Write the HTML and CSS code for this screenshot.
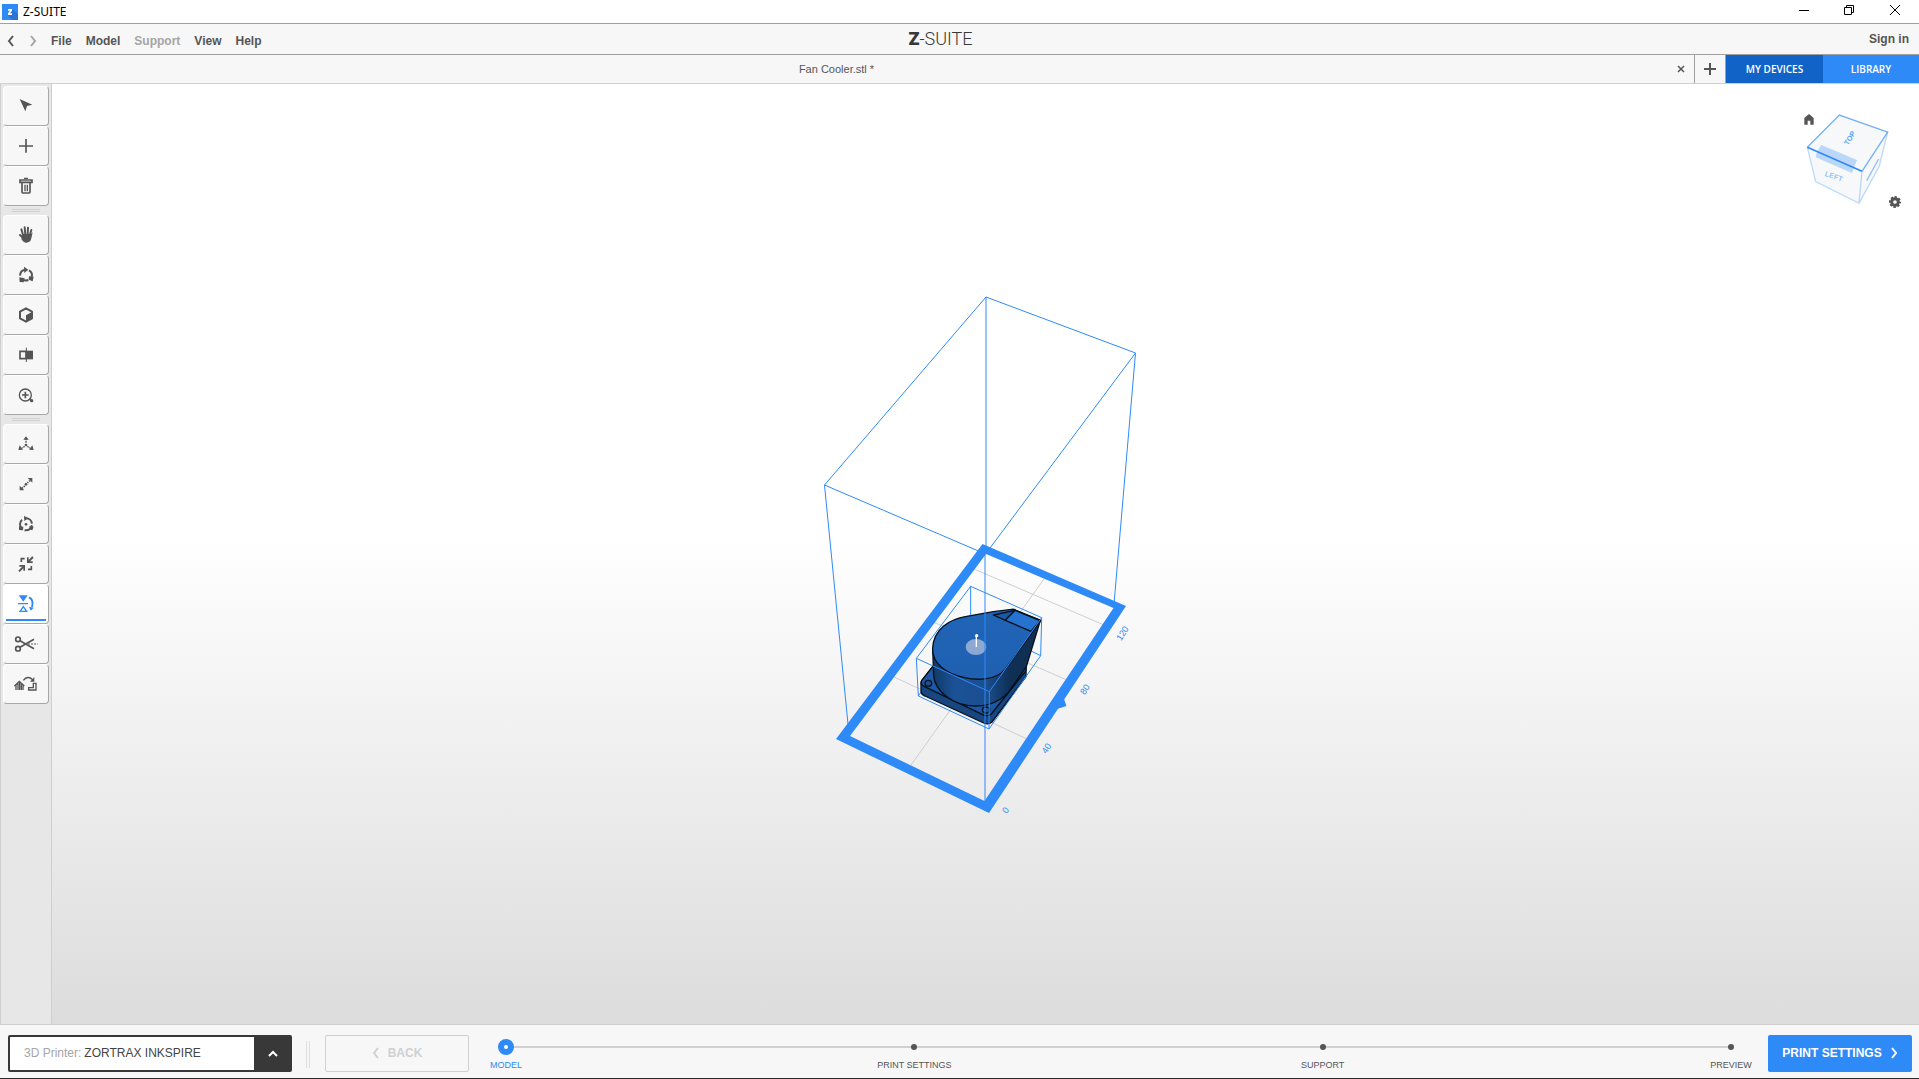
FILE: index.html
```html
<!DOCTYPE html>
<html lang="en">
<head>
<meta charset="utf-8">
<title>Z-SUITE</title>
<link rel="stylesheet" href="styles.css">
</head>
<body>
<div class="app">
  <header class="titlebar">
    <svg class="app-icon" viewBox="0 0 48 48" aria-hidden="true"><path fill="#2e8af7" d="M0 0h48v48H0z"/><path fill="#2a74d6" d="M30 16l18 14v18H30L18 33z"/><path fill="#fff" d="M18 15h12v5l-6 8h6v5H18v-5l6-8h-6z"/></svg>
    <span class="app-title">Z-SUITE</span>
    <div class="window-controls">
      <button type="button" aria-label="Minimize"><svg viewBox="0 0 12 12"><path d="M1 6.5h10"/></svg></button>
      <button type="button" aria-label="Restore"><svg viewBox="0 0 12 12"><path d="M.5 3.500h7v7h-7zM2.500 3.500v-2h7v7h-2"/></svg></button>
      <button type="button" aria-label="Close"><svg viewBox="0 0 12 12"><path d="M0 1l10 10M10 1L0 11"/></svg></button>
    </div>
  </header>

  <div class="menubar">
    <nav class="menu" aria-label="Main menu">
      <button type="button" class="history" aria-label="Undo"><svg viewBox="0 0 8 12"><path d="M6 1L2 6l4 5"/></svg></button>
      <button type="button" class="history" aria-label="Redo" disabled><svg viewBox="0 0 8 12"><path d="M2 1l4 5-4 5"/></svg></button>
      <button type="button">File</button>
      <button type="button">Model</button>
      <button type="button" disabled>Support</button>
      <button type="button">View</button>
      <button type="button">Help</button>
    </nav>
    <div class="brand"><b>Z</b>-SUITE</div>
    <a class="sign-in" href="#">Sign in</a>
  </div>

  <div class="tabs">
    <div class="tab">
      <span class="tab-name">Fan Cooler.stl *</span>
      <button type="button" class="tab-close" aria-label="Close tab"><svg viewBox="0 0 8 8"><path d="M1 1l6 6M7 1L1 7"/></svg></button>
    </div>
    <button type="button" class="tab-add" aria-label="New tab"><svg viewBox="0 0 12 12"><path d="M6 0v12M0 6h12"/></svg></button>
    <button type="button" class="tab-action devices">MY DEVICES</button>
    <button type="button" class="tab-action library">LIBRARY</button>
  </div>

  <main class="workspace">
    <aside class="toolbar" aria-label="Tools">
      <div class="tool-group">
        <button type="button" class="tool" aria-label="Select"><svg viewBox="0 0 72 72"><path class="f" d="M17 15l38 17-16 4-5 16z"/></svg></button>
        <button type="button" class="tool" aria-label="Add"><svg viewBox="0 0 72 72"><path class="s w5" d="M36 15v41M15 36h42"/></svg></button>
        <button type="button" class="tool" aria-label="Delete"><svg viewBox="0 0 72 72"><path class="s w5" d="M18 18h36v7H18zM24 26v27q0 4 4 4h16q4 0 4-4V26"/><path class="s w4" d="M30 13h12M33 32v20M40 32v20"/></svg></button>
      </div>
      <div class="tool-group">
        <button type="button" class="tool" aria-label="Pan"><svg viewBox="0 0 72 72"><path class="s w6" stroke-linecap="round" d="M28 39L22 19M34 35L32 13M41 35l1-21M47 38l5-17M29 47L18 36"/><path class="f" d="M26 33h25l5-5-4 18q-2 13-15 13-9 0-15-11l3-6z"/></svg></button>
        <button type="button" class="tool" aria-label="Orbit"><svg viewBox="0 0 72 72"><path class="s w6" d="M18 38Q19 22 33 20M45 22Q57 29 53 42M43 51q-9 4-17-1"/><path class="f" d="M30 11l13 9-12 10zM45 40l14 1-3 14-12-5zM16 43l16 3-3 12-12-1z"/></svg></button>
        <button type="button" class="tool" aria-label="View mode"><svg viewBox="0 0 72 72"><path class="s w6" stroke-linejoin="round" d="M36 16l18 10v20L36 56 18 46V26z"/><path class="f" d="M36 37l19-11v20L36 57z"/></svg></button>
        <button type="button" class="tool" aria-label="Cross-section"><svg viewBox="0 0 72 72"><path class="s w5" d="M18 25h18v22H18z"/><path class="f" d="M36 23h21v26H36z"/><path class="s w3" d="M37 14v43"/></svg></button>
        <button type="button" class="tool" aria-label="Zoom"><svg viewBox="0 0 72 72"><circle class="s w4" cx="34" cy="36" r="18"/><path class="s w5" d="M34 26v20M24 36h20M46 48l5 4"/><circle class="f" cx="53" cy="53" r="5"/></svg></button>
      </div>
      <div class="tool-group">
        <button type="button" class="tool" aria-label="Move"><svg viewBox="0 0 72 72"><path class="s w4" stroke-dasharray="5 2" d="M36 32V20M32 43l-8 5M40 43l8 5"/><circle class="f" cx="36" cy="39" r="4"/><path class="f" d="M36 13l8 10H28zM13 54l4-14 10 13zM59 54l-4-14-10 13z"/></svg></button>
        <button type="button" class="tool" aria-label="Scale"><svg viewBox="0 0 72 72"><path class="s w5" stroke-dasharray="4 3" d="M24 49l9-8M40 33l10-9"/><circle class="f" cx="36" cy="37" r="4"/><path class="f" d="M55 18v14l-5-5-5-5-4-4zM17 55V41l5 5 5 5 4 4z"/></svg></button>
        <button type="button" class="tool" aria-label="Rotate"><svg viewBox="0 0 72 72"><circle class="s w6" cx="36" cy="37" r="18" stroke-dasharray="29 9" stroke-dashoffset="-3"/><circle class="f" cx="36" cy="37" r="4"/><path class="f" d="M30 11l12 8-11 8zM47 42l12 2-4 11-10-3zM15 43l13 1-1 11-12-1z"/></svg></button>
        <button type="button" class="tool" aria-label="Fit"><svg viewBox="0 0 72 72"><path class="s w5" d="M22 30V20h10M52 42v10H42"/><path class="s w6" d="M57 15L43 29M15 58l14-14"/><path class="f" d="M39 16v17h17v-5H44V16zM16 39h17v17h-5V44H16z"/></svg></button>
        <button type="button" class="tool active" aria-label="Auto-orient" aria-pressed="true"><svg viewBox="0 0 72 72"><path class="f" d="M14 10h27L28 29z"/><path class="s w4" d="M12 35h30M28 44l10 14H18z"/><path class="s w6" d="M45 16Q60 22 54 45"/><path class="f" d="M45 44l14 3-9 9z"/></svg></button>
        <button type="button" class="tool" aria-label="Cut"><svg viewBox="0 0 72 72"><circle class="s w5" cx="12" cy="22" r="7"/><circle class="s w5" cx="12" cy="50" r="7"/><path class="s w5" d="M18 26l42 24M18 46l42-24"/><path class="s w3" stroke-dasharray="6 3" d="M42 36h29"/></svg></button>
        <button type="button" class="tool" aria-label="Replace"><svg viewBox="0 0 72 72"><path class="s w4" d="M1 42l15-14 15 14M6 40v14M12 34v20M17 30v24M22 34v20M27 40v14"/><path class="s w4" d="M28 25q13-16 28-2"/><path class="f" d="M61 15v14H48z"/><path class="s w4" d="M58 34h8v20H44v-7h14z"/></svg></button>
      </div>
    </aside>

    <section class="viewport" aria-label="Build volume">
      <svg class="scene" viewBox="52 84 1867 940" role="img" aria-label="Fan Cooler model on the build platform">
        <defs>
          <linearGradient id="side" x1="0" x2="1"><stop offset="0" stop-color="#113864"/><stop offset=".2" stop-color="#1b5297"/><stop offset=".5" stop-color="#1a4f90"/><stop offset=".72" stop-color="#0f2f55"/><stop offset="1" stop-color="#112f52"/></linearGradient>
          <linearGradient id="top" x1="0" y1="0" x2="0" y2="1"><stop offset="0" stop-color="#2165b8"/><stop offset="1" stop-color="#1f60b0"/></linearGradient>
        </defs>
        <g class="volume">
          <path d="M986 297l149.500 56L985.500 554 824.500 485z"/>
          <path d="M986 297V554M1135.500 353L1114 604M824.500 485L848 724"/>
        </g>
        <path class="grid" d="M974 569l130 56M933 622l134 58M894 677l133 62M1044 579L911 765"/>
        <path class="plate" fill-rule="evenodd" d="M982.500 544L1126 606 989 813 836 739zM986 554L850 736l134.500 65 129-193z"/>
        <path class="plate" d="M1064 699l2.500 7-9.500 3-3-5z"/>
        <g class="scale">
          <text transform="translate(1125 635) rotate(-57)">120</text>
          <text transform="translate(1087.500 691) rotate(-57)">80</text>
          <text transform="translate(1049 750) rotate(-57)">40</text>
          <text transform="translate(1008 812) rotate(-57)">0</text>
        </g>
        <g transform="translate(880 560) scale(.33333)">
          <path class="bbox" d="M272 79v106M272 185L115 408M272 185l210 102"/>
          <g class="model">
            <path fill="#174680" d="M158 320l-33 42q-3 5-2 15v18q1 9 12 13l176 81q15 6 25-3L438 350V300z"/>
            <path fill="#1c58a4" d="M158 320l-33 42q-5 11 9 18l174 84q16 7 26-2L438 332V300z"/>
            <ellipse fill="#1b4f90" cx="145" cy="370" rx="10" ry="9"/>
            <ellipse fill="#1b4f90" cx="318" cy="450" rx="11" ry="9"/>
            <path fill="url(#side)" d="M158 265l3 82c4 44 54 91 126 91 62 0 98-35 110-58l42-60 41-135-105 80z"/>
            <path fill="url(#top)" d="M158 265c2-57 50-88 102-96l80-14 55-7q7-1 13 3l75 30L375 328c-30 36-90 32-121 25-58-11-98-45-96-88z"/>
            <path fill="#1c58a4" d="M340 165l65-14-29 30z"/>
            <path fill="#2672cf" d="M405 151l75 31-27 32-77-33z"/>
          </g>
          <ellipse fill="#a9bcd8" fill-opacity=".8" cx="288" cy="261" rx="31" ry="24"/>
          <path fill="none" stroke="#fff" stroke-width="4" d="M289 261v-34"/><circle fill="#fff" cx="290" cy="227" r="5"/>
          <path class="bbox" d="M272 79l213 94-157 222-219-100zM485 173l-3 114-155 220-212-99-6-113M328 395l-1 112"/>
        </g>
        <path class="pillar" d="M985 554V801"/>
      </svg>

      <div class="nav-cube">
        <button type="button" class="home" aria-label="Home view"><svg viewBox="0 0 30 33"><path fill="#555" d="M15 0l14 12v20H19V20h-8v12H1V12z"/></svg></button>
        <svg class="cube" viewBox="495 340 255 276" role="img" aria-label="View cube">
          <path fill="#f7f8fa" d="M598 346l145 51-25 102-61 112-130-65-25-103z"/>
          <path class="edge" opacity=".3" stroke-width="4" d="M502 443l25 103 130 65 9-96M743 397l-25 102-61 112"/>
          <path fill="#2e8af7" fill-opacity=".3" d="M544 436l107 45-15 39-109-47 4-17z"/>
          <path class="edge" opacity=".65" stroke-width="4" d="M502 443l96-97 145 51-77 118"/>
          <path class="edge" stroke-width="5" d="M502 443l164 72"/>
          <path class="edge" opacity=".5" stroke-width="4" d="M680 543l36-65"/>
          <text class="face" transform="translate(624 438) rotate(-58)">TOP</text>
          <text class="face faint" transform="translate(553 528) rotate(19)">LEFT</text>
        </svg>
        <button type="button" class="gear" aria-label="View settings"><svg viewBox="0 0 36 36"><circle cx="18" cy="18" r="10" fill="none" stroke="#555" stroke-width="9"/><circle cx="18" cy="18" r="15" fill="none" stroke="#555" stroke-width="6" stroke-dasharray="7 4.780" stroke-dashoffset="3"/></svg></button>
      </div>
    </section>
  </main>

  <footer class="bottombar">
    <div class="printer">
      <label for="printer">3D Printer:</label>
      <select id="printer"><option>ZORTRAX INKSPIRE</option></select>
      <button type="button" aria-label="Choose printer"><svg viewBox="0 0 12 8"><path d="M2 6l4-4 4 4"/></svg></button>
    </div>
    <div class="grip"></div>
    <button type="button" class="back" disabled><svg viewBox="0 0 8 12"><path d="M6 1L2 6l4 5"/></svg>BACK</button>
    <ol class="steps">
      <li class="current"><i></i><span>MODEL</span></li>
      <li><i></i><span>PRINT SETTINGS</span></li>
      <li><i></i><span>SUPPORT</span></li>
      <li><i></i><span>PREVIEW</span></li>
    </ol>
    <button type="button" class="next">PRINT SETTINGS<svg viewBox="0 0 8 12"><path d="M2 1l4 5-4 5"/></svg></button>
  </footer>
</div>
</body>
</html>
```
FILE: styles.css
```css
*, *::before { box-sizing: border-box; }

body {
  margin: 0;
  font-family: "Liberation Sans", Arial, sans-serif;
  font-size: 12px;
  color: #555;
}

button, select {
  margin: 0;
  padding: 0;
  border: 0;
  background: none;
  font: inherit;
  color: inherit;
}

svg { display: block; }

.app {
  display: flex;
  flex-direction: column;
  height: 100vh;
  background: #f7f7f7;
}

/* Title bar */
.titlebar {
  display: flex;
  flex: 0 0 24px;
  align-items: center;
  padding-left: 2px;
  background: #fff;
  border-bottom: 1px solid #a0a0a0;
}
.app-icon { width: 16px; height: 16px; }
.app-title {
  padding-left: 5px;
  font-family: "Noto Sans", "Open Sans", sans-serif;
  color: #000;
}
.window-controls {
  display: flex;
  align-self: flex-start;
  margin-left: auto;
}
.window-controls button {
  display: grid;
  place-items: center;
  width: 46px;
  height: 20px;
}
.window-controls svg {
  width: 12px;
  height: 12px;
  fill: none;
  stroke: #000;
}

/* Menu bar */
.menubar {
  display: grid;
  grid-template-columns: 1fr auto 1fr 38px;
  flex: 0 0 31px;
  align-items: center;
  border-bottom: 1px solid #a0a0a0;
}
.menu {
  display: flex;
  gap: 14px;
  padding: 3px 0 0 7px;
  font-weight: bold;
}
.menu button:disabled { color: #a5a5a5; }
.menu .history svg {
  width: 8px;
  height: 12px;
  fill: none;
  stroke: currentColor;
  stroke-width: 2;
}
.brand {
  font-family: Roboto, "Noto Sans", sans-serif;
  font-size: 18px;
  font-weight: 300;
  line-height: 20px;
  color: #383838;
}
.brand b { font-weight: 900; }
.sign-in {
  grid-column: 3 / 5;
  justify-self: end;
  padding-right: 10px;
  font-weight: bold;
  color: inherit;
  text-decoration: none;
}

/* Document tabs */
.tabs {
  display: flex;
  flex: 0 0 29px;
  border-bottom: 1px solid #d0d0d0;
}
.tab {
  display: flex;
  flex: 1;
  align-items: center;
  font-size: 11px;
}
.tab-name { flex: 1; text-align: center; }
.tab-close { padding: 0 9px 0 4px; }
.tab-close svg {
  width: 8px;
  height: 8px;
  stroke: #555;
  stroke-width: 1.500;
}
.tab-add {
  display: grid;
  place-items: center;
  width: 32px;
  border: solid #a0a0a0;
  border-width: 0 1px;
}
.tab-add svg {
  width: 12px;
  height: 12px;
  stroke: #555;
  stroke-width: 2;
}
.tab-action {
  width: 97px;
  font: 600 10px "Open Sans", "Noto Sans", sans-serif;
  color: #fff;
}
.devices { background: #1163c8; }
.library { width: 96px; background: #2e8af7; }

/* Work area */
.workspace {
  display: flex;
  flex: 1;
  min-height: 0;
}

.toolbar {
  display: flex;
  flex: 0 0 52px;
  flex-direction: column;
  padding: 2px;
  background: #e7e7e7;
  border: solid #cfcfcf;
  border-width: 0 1px;
}
.tool-group + .tool-group::before {
  content: "";
  display: block;
  width: 28px;
  height: 3px;
  margin: 3px auto;
  border: solid #d0d0d0;
  border-width: 1px 0;
}
.tool {
  display: grid;
  place-items: center;
  width: 46px;
  height: 40px;
  background: #f7f7f7;
  border: 1px solid #fff;
  border-right-color: #a8a8a8;
  border-bottom-color: #a8a8a8;
  border-radius: 4px;
  color: #555;
}
.tool svg { width: 24px; height: 24px; }
.tool .f { fill: currentColor; }
.tool .s { fill: none; stroke: currentColor; }
.w3 { stroke-width: 3; }
.w4 { stroke-width: 4; }
.w5 { stroke-width: 5; }
.w6 { stroke-width: 6; }
.tool.active {
  background: linear-gradient(#2e8af7, #2e8af7) center bottom 2px / 40px 2px no-repeat #fff;
  color: #2e8af7;
}

.viewport {
  position: relative;
  flex: 1;
  min-width: 0;
  background: linear-gradient(#fff 48%, #dcdcdc);
}
.scene { width: 100%; height: 100%; }
.volume, .bbox, .pillar { fill: none; stroke: #2e8af7; }
.bbox { stroke-width: 3; }
.grid { fill: none; stroke: #cecece; }
.plate { fill: #2e8af7; }
.scale { fill: #2e8af7; font-size: 9px; text-anchor: middle; }
.model { stroke: #06101d; stroke-width: 4; stroke-linejoin: round; }

.nav-cube {
  position: absolute;
  top: 29px;
  right: 18px;
  width: 100px;
  height: 95px;
}
.cube {
  width: 85px;
  height: 92px;
  margin-left: 4px;
}
.edge { fill: none; stroke: #2e8af7; }
.face { font-size: 22px; font-weight: bold; fill: #2e8af7; fill-opacity: .8; }
.faint { fill-opacity: .5; }
.home, .gear { position: absolute; }
.home { top: 1px; left: 3px; }
.home svg { width: 10px; height: 11px; }
.gear { right: 0; bottom: 0; }
.gear svg { width: 12px; height: 12px; }

/* Bottom bar */
.bottombar {
  display: flex;
  flex: 0 0 55px;
  align-items: flex-start;
  padding: 10px 7px 0 8px;
  border-top: 1px solid #cfcfcf;
  border-bottom: 1px solid #2a2a2a;
}
.printer {
  display: flex;
  align-items: center;
  width: 284px;
  height: 37px;
  background: #fff;
  border: 2px solid #383838;
  border-radius: 2px;
}
.printer label { padding: 0 3px 2px 14px; color: #a5a5a5; }
.printer select { flex: 1; height: 100%; padding-bottom: 2px; appearance: none; color: #444; }
.printer button {
  display: grid;
  place-items: center;
  width: 36px;
  height: 100%;
  padding-left: 2px;
  background: #383838;
}
.printer svg {
  width: 12px;
  height: 8px;
  fill: none;
  stroke: #fff;
  stroke-width: 2;
}
.grip {
  width: 4px;
  height: 27px;
  margin: 6px 15px 0 14px;
  border: solid #dedede;
  border-width: 0 1px;
}
.back, .next {
  display: flex;
  align-items: center;
  justify-content: center;
  gap: 8px;
  width: 144px;
  height: 37px;
  padding-bottom: 2px;
  border-radius: 2px;
  font-weight: bold;
}
.back { border: 1px solid #d0d0d0; color: #d0d0d0; }
.next { background: #2e8af7; color: #fff; }
.back svg, .next svg {
  width: 8px;
  height: 12px;
  fill: none;
  stroke: currentColor;
  stroke-width: 2;
}
.steps {
  display: flex;
  flex: 1;
  justify-content: space-between;
  margin: 0 1px;
  padding: 0;
  list-style: none;
  font-size: 9px;
  line-height: 12px;
  background: linear-gradient(#d0d0d0, #d0d0d0) 36px 11px / calc(100% - 72px) 2px no-repeat;
}
.steps li {
  display: flex;
  flex-direction: column;
  align-items: center;
  width: 72px;
  padding-top: 4px;
  white-space: nowrap;
}
.steps i {
  width: 6px;
  height: 6px;
  margin: 5px;
  border-radius: 50%;
  background: #555;
}
.steps span { padding-top: 4px; }
.steps .current { color: #2e8af7; }
.steps .current i {
  width: 16px;
  height: 16px;
  margin: 0;
  background: #fff;
  border: 6px solid #2e8af7;
}
```
